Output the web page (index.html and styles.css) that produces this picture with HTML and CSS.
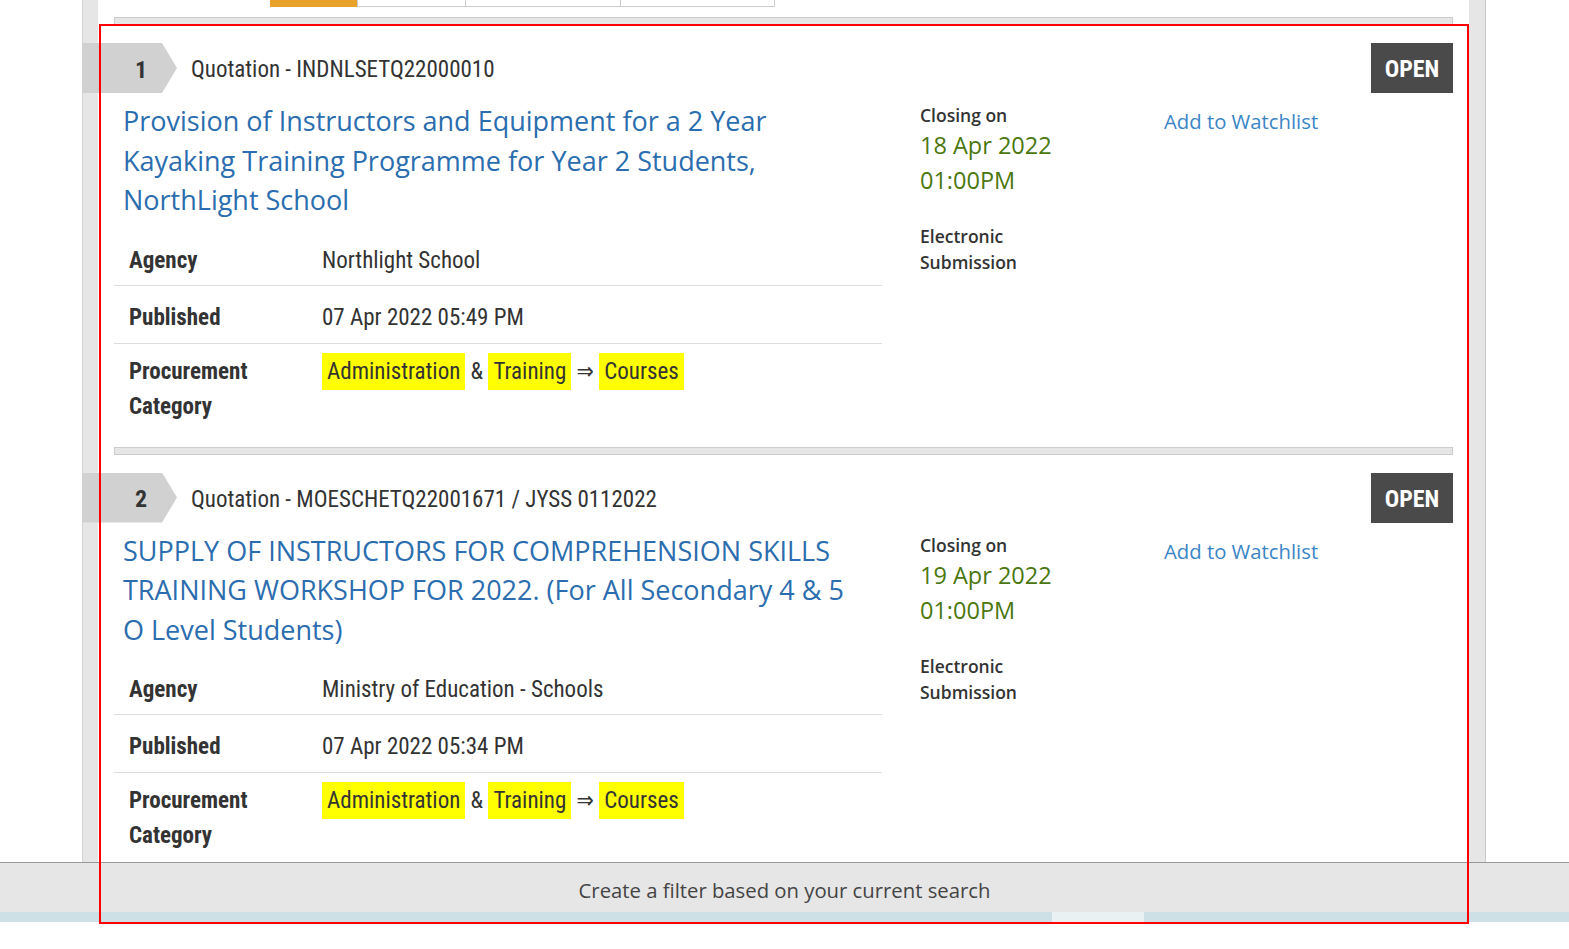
FILE: index.html
```html
<!DOCTYPE html>
<html lang="en">
<head>
<meta charset="utf-8">
<title>Opportunities</title>
<link rel="stylesheet" href="styles.css">
</head>
<body>
<div class="frame">
  <div class="inner">
    <div class="tabs">
      <span class="tab tab-active"></span>
      <span class="tab tab-w1"></span>
      <span class="tab tab-w2"></span>
      <span class="tab tab-w3"></span>
    </div>
    <div class="sep"></div>

    <div class="item">
      <div class="item-head">
        <div class="num"><span>1</span></div>
        <div class="ref">Quotation - INDNLSETQ22000010</div>
        <div class="status">OPEN</div>
      </div>
      <div class="item-body">
        <div class="main-col">
          <h2 class="title">Provision of Instructors and Equipment for a 2 Year Kayaking Training Programme for Year 2 Students, NorthLight School</h2>
          <div class="details">
            <div class="row row-first"><div class="label">Agency</div><div class="value">Northlight School</div></div>
            <div class="row row-pub"><div class="label">Published</div><div class="value">07 Apr 2022 05:49 PM</div></div>
            <div class="row row-cat"><div class="label">Procurement Category</div><div class="value"><span class="hl">Administration</span> &amp; <span class="hl">Training</span> ⇒ <span class="hl">Courses</span></div></div>
          </div>
        </div>
        <div class="closing-col">
          <div class="closing-label">Closing on</div>
          <div class="closing-date">18 Apr 2022<br>01:00PM</div>
          <div class="submission">Electronic<br>Submission</div>
        </div>
        <div class="watch-col"><span class="watch">Add to Watchlist</span></div>
      </div>
    </div>
    <div class="sep"></div>

    <div class="item">
      <div class="item-head">
        <div class="num"><span>2</span></div>
        <div class="ref">Quotation - MOESCHETQ22001671 / JYSS 0112022</div>
        <div class="status">OPEN</div>
      </div>
      <div class="item-body">
        <div class="main-col">
          <h2 class="title">SUPPLY OF INSTRUCTORS FOR COMPREHENSION SKILLS TRAINING WORKSHOP FOR 2022. (For All Secondary 4 &amp; 5 O Level Students)</h2>
          <div class="details">
            <div class="row row-first"><div class="label">Agency</div><div class="value">Ministry of Education - Schools</div></div>
            <div class="row row-pub"><div class="label">Published</div><div class="value">07 Apr 2022 05:34 PM</div></div>
            <div class="row row-cat"><div class="label">Procurement Category</div><div class="value"><span class="hl">Administration</span> &amp; <span class="hl">Training</span> ⇒ <span class="hl">Courses</span></div></div>
          </div>
        </div>
        <div class="closing-col">
          <div class="closing-label">Closing on</div>
          <div class="closing-date">19 Apr 2022<br>01:00PM</div>
          <div class="submission">Electronic<br>Submission</div>
        </div>
        <div class="watch-col"><span class="watch">Add to Watchlist</span></div>
      </div>
    </div>
    <div class="sep"></div>
  </div>
</div>

<div class="footer">
  <div class="filterbar">Create a filter based on your current search</div>
  <div class="strip"><span class="strip-patch"></span></div>
  <div class="footer-blank"></div>
</div>

<div class="annot"></div>
</body>
</html>
```

FILE: styles.css
```css
html, body {
  margin: 0;
  padding: 0;
  background: #ffffff;
}

body {
  font-family: "Open Sans", "Liberation Sans", sans-serif;
  color: #333333;
  height: 1200px;
}

.frame {
  box-sizing: border-box;
  width: 1404px;
  margin-left: 82px;
  padding: 0 16px 0 15px;
  background: #e6e6e6;
  border-left: 1px solid #d4d4d4;
  border-right: 1px solid #c8c8c8;
  min-height: 1200px;
}

.inner {
  background: #ffffff;
  padding: 0 16px;
  min-height: 1200px;
}

.tabs {
  display: flex;
  align-items: flex-end;
  height: 7px;
  overflow: hidden;
  margin-left: 156px;
}

.tab {
  box-sizing: border-box;
  height: 30px;
  flex: none;
  background: #ffffff;
  border: 1px solid #cccccc;
  border-left: none;
}

.tab-active {
  width: 87px;
  background: #e8a22a;
  border: none;
}

.tab-w1 { width: 109px; border-left: 1px solid #cccccc; }
.tab-w2 { width: 155px; }
.tab-w3 { width: 154px; }

.sep {
  box-sizing: border-box;
  height: 8px;
  margin-top: 10px;
  background: #e6e6e6;
  border: 1px solid #cccccc;
}

.item {
  padding-top: 18px;
  padding-bottom: 13px;
}

.item + .sep {
  margin-top: 0;
}

.item-head {
  display: flex;
  align-items: center;
  height: 50px;
  margin-left: -32px;
}

.num, .ref, .status, .details {
  font-family: "Roboto Condensed", "Liberation Sans Narrow", "DejaVu Sans Condensed", "Roboto", sans-serif;
  font-stretch: condensed;
}

.num {
  width: 95px;
  height: 50px;
  flex: none;
  background: #d1d1d1;
  clip-path: polygon(0 0, 80px 0, 95px 50%, 80px 100%, 0 100%);
  display: flex;
  align-items: center;
  padding-left: 48px;
  padding-top: 3px;
  box-sizing: border-box;
  font-size: 24px;
  font-weight: 700;
  color: #333333;
}

.num span {
  width: 22px;
  text-align: center;
}

.ref {
  margin-left: 14px;
  padding-top: 3px;
  font-size: 23px;
  color: #333333;
}

.status {
  margin-left: auto;
  width: 82px;
  height: 50px;
  box-sizing: border-box;
  padding-top: 2px;
  background: #4a4a4a;
  color: #ffffff;
  font-size: 24px;
  font-weight: 700;
  display: flex;
  align-items: center;
  justify-content: center;
}

.item-body {
  display: flex;
  margin-top: 8px;
}

.main-col {
  width: 768px;
  flex: none;
}

.title {
  margin: 0;
  padding: 0 24px 0 9px;
  font-size: 27px;
  font-weight: 400;
  line-height: 39.5px;
  color: #2b6dae;
}

.details {
  margin-top: 8px;
  font-size: 23px;
  color: #333333;
}

.row {
  display: flex;
  padding: 12px 15px 10px;
  line-height: 35px;
  border-bottom: 1px solid #dddddd;
}

.row-first {
  padding-top: 15px;
  padding-bottom: 7px;
}

.row-pub {
  padding-top: 14px;
  padding-bottom: 8px;
}

.row-cat {
  padding-top: 10px;
  padding-bottom: 10px;
}

.row:last-child {
  border-bottom: none;
}

.label {
  width: 193px;
  flex: none;
  font-weight: 700;
}

.value {
  flex: 1;
}

.hl {
  background: #ffff00;
  padding: 5px 5px 5px;
}

.closing-col {
  width: 244px;
  flex: none;
  margin-left: 38px;
  padding-top: 1px;
}

.closing-label, .submission {
  font-size: 17.5px;
  font-weight: 600;
  line-height: 26px;
  color: #333333;
}

.closing-date {
  font-size: 23.5px;
  line-height: 35px;
  color: #4a770e;
}

.submission {
  margin-top: 25px;
}

.watch-col {
  padding-top: 6px;
}

.watch {
  font-size: 20.3px;
  line-height: 28px;
  color: #3a85c6;
}

.footer {
  position: fixed;
  left: 0;
  right: 0;
  bottom: 0;
  z-index: 5;
}

.filterbar {
  height: 44px;
  padding-top: 5px;
  border-top: 1px solid #9a9a9a;
  background: #e6e6e6;
  display: flex;
  align-items: center;
  justify-content: center;
  font-size: 20.3px;
  line-height: 28px;
  color: #444444;
}

.strip {
  height: 10px;
  background: #cde0e6;
  display: flex;
}

.strip-patch {
  margin-left: 1052px;
  width: 92px;
  background: #e9f1f3;
}

.footer-blank {
  height: 27px;
  background: #ffffff;
}

.annot {
  position: fixed;
  left: 99px;
  top: 24px;
  width: 1370px;
  height: 900px;
  box-sizing: border-box;
  border: 2px solid #ff0000;
  pointer-events: none;
  z-index: 10;
}
```
